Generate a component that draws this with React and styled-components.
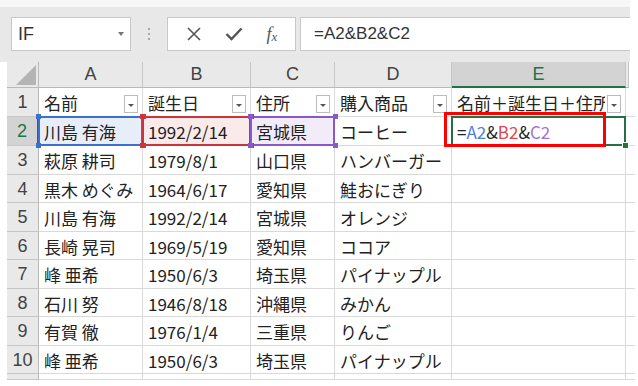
import styled, { createGlobalStyle } from "styled-components";

const GlobalStyle = createGlobalStyle`
  body {
    margin: 0;
    background: #ffffff;
  }
`;

const GREEN = "#217346";

const Window = styled.div`
  position: relative;
  width: 630px;
  font-family: "Noto Sans CJK JP", sans-serif;
`;

const TopEdge = styled.div`
  height: 7px;
  background: #f7f7f7;
`;

const Toolbar = styled.div`
  display: flex;
  align-items: flex-start;
  height: 55px;
  box-sizing: border-box;
  padding: 10px 0 0 11px;
  background: #e8e8e8;
`;

const NameBox = styled.div`
  display: flex;
  align-items: center;
  width: 120px;
  height: 34px;
  box-sizing: border-box;
  padding: 0 6px 0 6px;
  background: #fff;
  border: 1px solid #c8c8c8;
  font-family: "Liberation Sans", sans-serif;
  font-size: 18px;
  color: #333;
`;

const Caret = styled.span`
  margin-left: auto;
  width: 0;
  height: 0;
  border-left: 3.5px solid transparent;
  border-right: 3.5px solid transparent;
  border-top: 4px solid #777;
`;

const Grip = styled.div`
  display: flex;
  flex-direction: column;
  align-items: center;
  gap: 3px;
  width: 36px;
  padding-top: 11px;

  span {
    width: 2px;
    height: 2px;
    background: #a8a8a8;
  }
`;

const ButtonBox = styled.div`
  display: flex;
  align-items: center;
  justify-content: space-around;
  width: 129px;
  height: 34px;
  box-sizing: border-box;
  padding: 0 6px;
  background: #fff;
  border: 1px solid #c8c8c8;
  color: #555;
`;

const Fx = styled.span`
  font-family: "Liberation Serif", serif;
  font-style: italic;
  font-size: 18px;
  color: #555;

  sub {
    font-size: 13px;
    vertical-align: -1px;
  }
`;

const FormulaInput = styled.div`
  display: flex;
  align-items: center;
  flex: 1;
  height: 34px;
  margin-left: 4px;
  box-sizing: border-box;
  padding-left: 13px;
  background: #fff;
  border: 1px solid #c8c8c8;
  border-right: none;
  font-family: "Liberation Sans", sans-serif;
  font-size: 17px;
  color: #333;
`;

const Sheet = styled.div`
  display: grid;
  margin-left: 7px;
  width: 622px;
  grid-template-columns: 32px 104px 108px 84px 117px 174px 3px;
  grid-template-rows: 26px 29px 29px 29px 28px 29px 28px 29px 28px 29px 28px 6px;
  font-size: 17px;
  color: #222;
`;

const CornerCell = styled.div`
  display: flex;
  align-items: flex-end;
  justify-content: flex-end;
  padding: 0 2px 2px 0;
  background: #e9e9e9;
  border-right: 1px solid #b9b9b9;
  border-bottom: 1px solid #b9b9b9;
`;

const ColHeader = styled.div`
  display: flex;
  align-items: center;
  justify-content: center;
  background: ${(p) => (p.$active ? "#d3d3d3" : "#e9e9e9")};
  color: ${(p) => (p.$active ? GREEN : "#444")};
  border-right: 1px solid #c6c6c6;
  border-bottom: ${(p) => (p.$active ? `2px solid ${GREEN}` : "1px solid #b9b9b9")};
  font-family: "Liberation Sans", sans-serif;
  font-size: 18px;
`;

const RowHeader = styled.div`
  display: flex;
  align-items: center;
  justify-content: center;
  background: ${(p) => (p.$active ? "#d3d3d3" : "#e9e9e9")};
  color: ${(p) => (p.$active ? GREEN : "#444")};
  border-right: ${(p) => (p.$active ? `2px solid ${GREEN}` : "1px solid #b9b9b9")};
  border-bottom: 1px solid #c6c6c6;
  font-family: "Liberation Sans", sans-serif;
  font-size: 18px;
  padding-top: 1px;
`;

const Cell = styled.div`
  position: relative;
  display: flex;
  align-items: center;
  gap: 2px;
  min-width: 0;
  padding: 1px 4px 0 5px;
  background: ${(p) => p.$fill || "#fff"};
  border-right: ${(p) => (p.$edge ? "none" : "1px solid #d9d9d9")};
  border-bottom: 1px solid #d9d9d9;
  white-space: nowrap;

  ${(p) =>
    p.$range &&
    `
    &::after {
      content: "";
      position: absolute;
      top: -1px;
      left: -1px;
      right: -1px;
      bottom: -1px;
      border: 2px solid ${p.$range};
      z-index: 1;
      pointer-events: none;
    }
  `}
`;

const CellText = styled.span`
  overflow: hidden;
  flex: 1;
  min-width: 0;
`;

const Handle = styled.span`
  position: absolute;
  z-index: 2;
  width: 5px;
  height: 5px;
  background: ${(p) => p.$color};
  ${(p) => (p.$v === "t" ? "top: -3px;" : "bottom: -3px;")}
  ${(p) => (p.$h === "l" ? "left: -3px;" : "right: -4px;")}
`;

const FillHandle = styled.span`
  position: absolute;
  z-index: 2;
  right: -4px;
  bottom: -4px;
  width: 5px;
  height: 5px;
  background: ${GREEN};
  border: 1px solid #fff;
`;

const FilterButton = styled.span`
  display: flex;
  align-items: center;
  justify-content: center;
  flex: none;
  align-self: flex-end;
  margin-bottom: 3px;
  width: 14px;
  height: 18px;
  box-sizing: border-box;
  background: #fff;
  border: 1px solid #bcbcbc;

  &::before {
    content: "";
    margin-top: 2px;
    border-left: 3px solid transparent;
    border-right: 3px solid transparent;
    border-top: 3px solid #555;
  }
`;

const Ref = styled.span`
  color: ${(p) => p.$color};
`;

const Annotation = styled.div`
  position: absolute;
  left: 444px;
  top: 112px;
  width: 162px;
  height: 35px;
  box-sizing: border-box;
  border: 3px solid #ff0000;
  z-index: 5;
  pointer-events: none;
`;

const RANGES = [
  { border: "#3d6fcc", fill: "#e8eef9", text: "#4f80dc" },
  { border: "#c9353d", fill: "#fbeaea", text: "#e0474e" },
  { border: "#8a58c8", fill: "#f2ecf9", text: "#a072d8" },
];

const HEADERS = ["名前", "誕生日", "住所", "購入商品", "名前＋誕生日＋住所"];

const ROWS = [
  ["川島 有海", "1992/2/14", "宮城県", "コーヒー"],
  ["萩原 耕司", "1979/8/1", "山口県", "ハンバーガー"],
  ["黒木 めぐみ", "1964/6/17", "愛知県", "鮭おにぎり"],
  ["川島 有海", "1992/2/14", "宮城県", "オレンジ"],
  ["長崎 晃司", "1969/5/19", "愛知県", "ココア"],
  ["峰 亜希", "1950/6/3", "埼玉県", "パイナップル"],
  ["石川 努", "1946/8/18", "沖縄県", "みかん"],
  ["有賀 徹", "1976/1/4", "三重県", "りんご"],
  ["峰 亜希", "1950/6/3", "埼玉県", "パイナップル"],
];

function Formula() {
  return (
    <>
      =<Ref $color={RANGES[0].text}>A2</Ref>&amp;
      <Ref $color={RANGES[1].text}>B2</Ref>&amp;
      <Ref $color={RANGES[2].text}>C2</Ref>
    </>
  );
}

function RangeCell({ range, children }) {
  return (
    <Cell $range={range.border} $fill={range.fill}>
      <CellText>{children}</CellText>
      <Handle $color={range.border} $v="t" $h="l" />
      <Handle $color={range.border} $v="b" $h="l" />
      <Handle $color={range.border} $v="t" $h="r" />
      <Handle $color={range.border} $v="b" $h="r" />
    </Cell>
  );
}

function App() {
  return (
    <Window>
      <GlobalStyle />
      <TopEdge />
      <Toolbar>
        <NameBox>
          IF
          <Caret />
        </NameBox>
        <Grip>
          <span />
          <span />
          <span />
        </Grip>
        <ButtonBox>
          <svg width="16" height="16" viewBox="0 0 16 16">
            <path d="M2 2 L14 14 M14 2 L2 14" stroke="#555" strokeWidth="1.6" fill="none" />
          </svg>
          <svg width="18" height="14" viewBox="0 0 18 14">
            <path d="M1.5 7 L6.5 12 L16.5 1.5" stroke="#555" strokeWidth="2.4" fill="none" />
          </svg>
          <Fx>
            f<sub>x</sub>
          </Fx>
        </ButtonBox>
        <FormulaInput>=A2&amp;B2&amp;C2</FormulaInput>
      </Toolbar>

      <Sheet>
        <CornerCell>
          <svg width="20" height="20" viewBox="0 0 20 20">
            <path d="M20 0 L20 20 L0 20 Z" fill="#b4b4b4" />
          </svg>
        </CornerCell>
        {["A", "B", "C", "D", "E"].map((c) => (
          <ColHeader key={c} $active={c === "E"}>
            {c}
          </ColHeader>
        ))}
        <ColHeader />

        <RowHeader>1</RowHeader>
        {HEADERS.map((h) => (
          <Cell key={h}>
            <CellText>{h}</CellText>
            <FilterButton />
          </Cell>
        ))}
        <Cell $edge />

        {ROWS.map((row, i) => {
          const n = i + 2;
          if (n === 2) {
            return [
              <RowHeader key="h2" $active>
                2
              </RowHeader>,
              ...row.slice(0, 3).map((v, j) => (
                <RangeCell key={`r2-${j}`} range={RANGES[j]}>
                  {v}
                </RangeCell>
              )),
              <Cell key="r2-3">
                <CellText>{row[3]}</CellText>
              </Cell>,
              <Cell key="r2-4" $range={GREEN}>
                <CellText>
                  <Formula />
                </CellText>
                <FillHandle />
              </Cell>,
              <Cell key="r2-5" $edge />,
            ];
          }
          return [
            <RowHeader key={`h${n}`}>{n}</RowHeader>,
            ...row.map((v, j) => (
              <Cell key={`r${n}-${j}`}>
                <CellText>{v}</CellText>
              </Cell>
            )),
            <Cell key={`r${n}-4`} />,
            <Cell key={`r${n}-5`} $edge />,
          ];
        })}

        <RowHeader />
        <Cell />
        <Cell />
        <Cell />
        <Cell />
        <Cell />
        <Cell $edge />
      </Sheet>

      <Annotation />
    </Window>
  );
}

export default App;
